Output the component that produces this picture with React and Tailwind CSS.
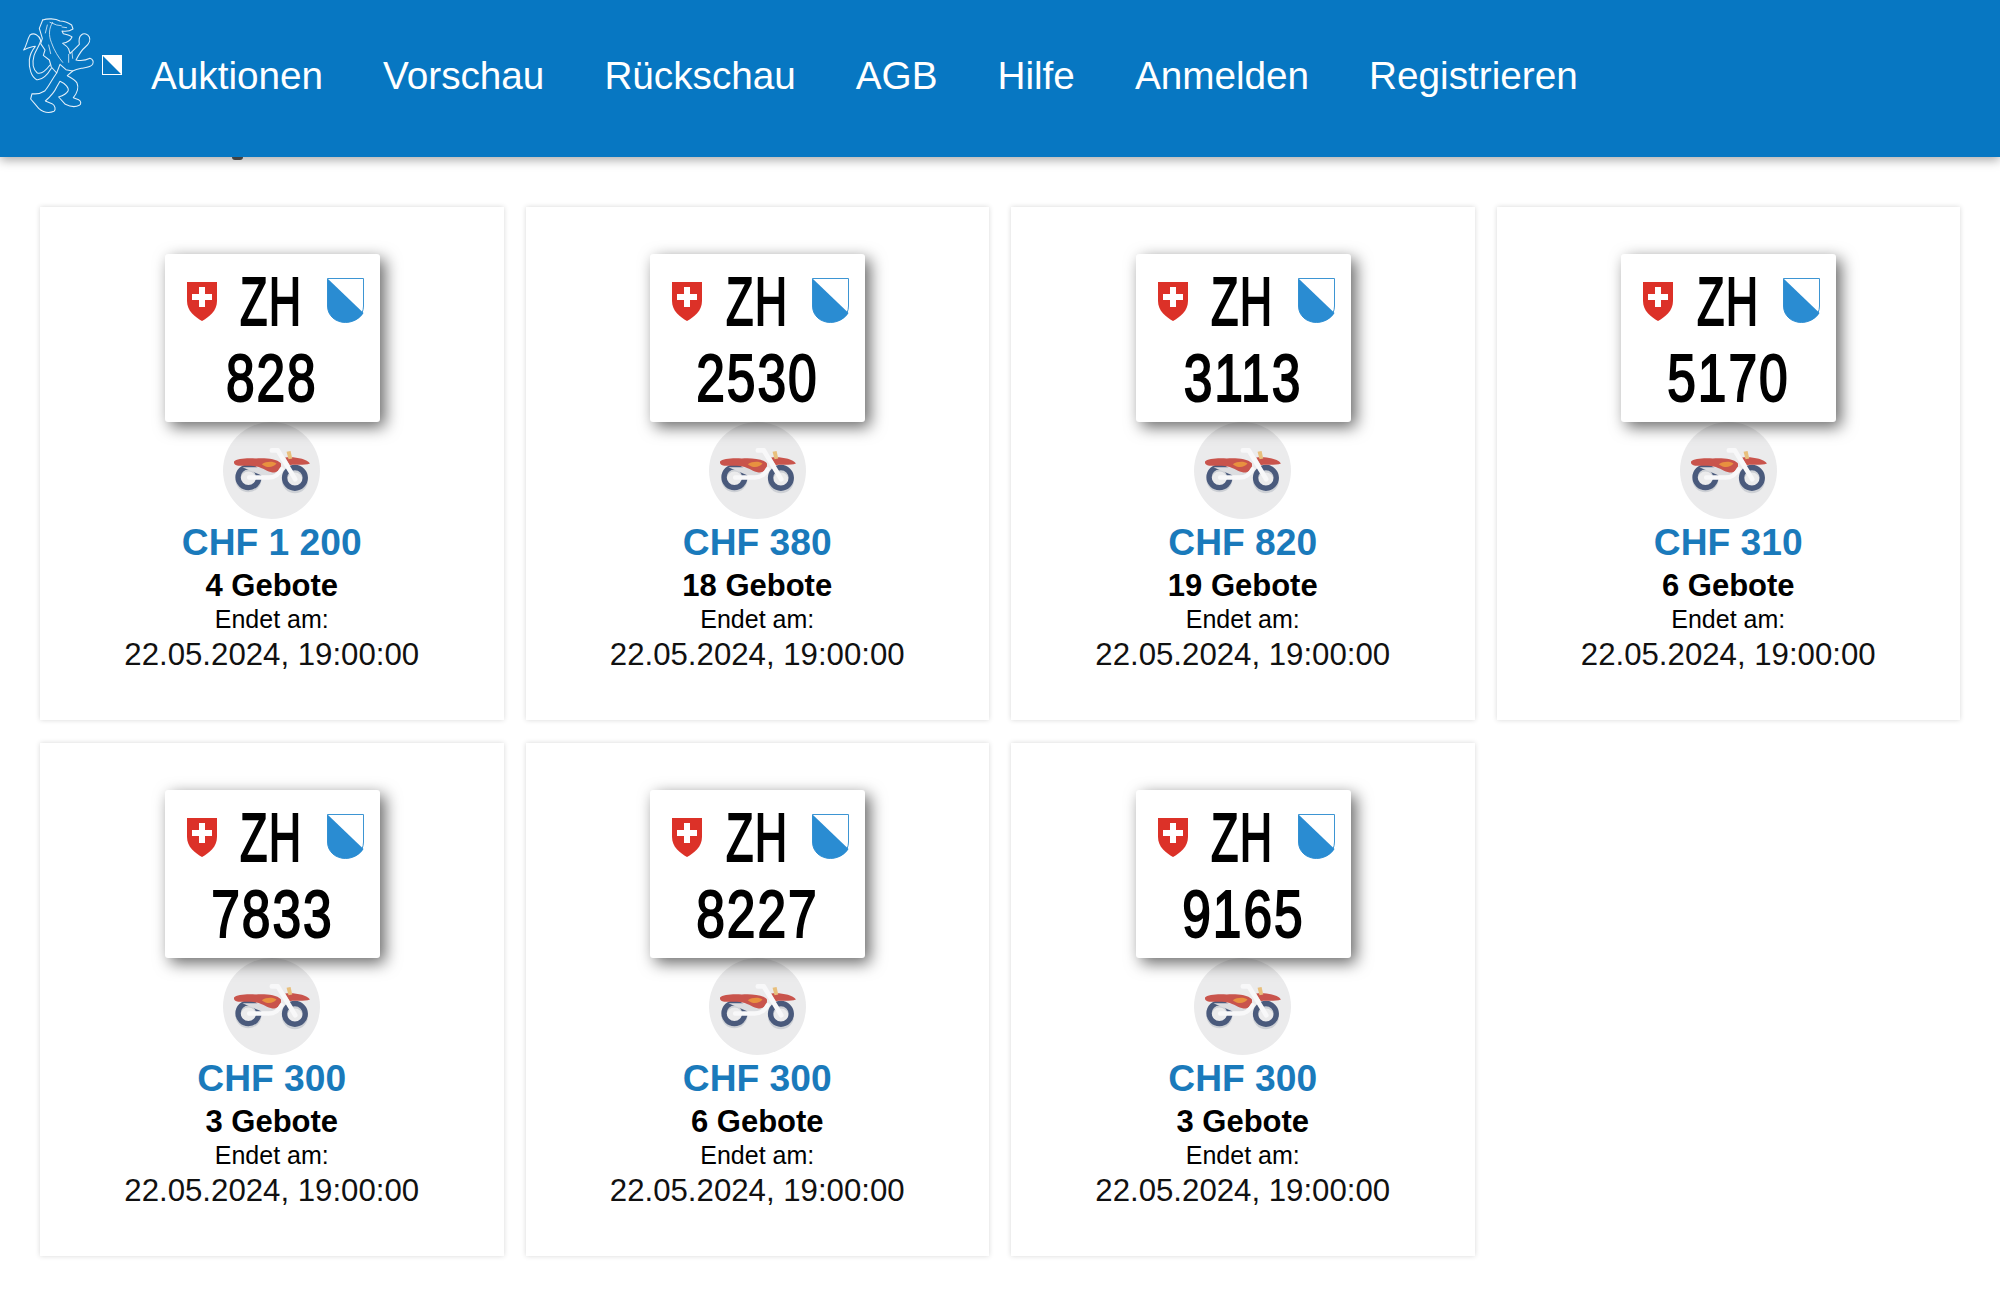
const plates = [
  { no: '828', price: 'CHF 1 200', bids: '4 Gebote' },
  { no: '2530', price: 'CHF 380', bids: '18 Gebote' },
  { no: '3113', price: 'CHF 820', bids: '19 Gebote' },
  { no: '5170', price: 'CHF 310', bids: '6 Gebote' },
  { no: '7833', price: 'CHF 300', bids: '3 Gebote' },
  { no: '8227', price: 'CHF 300', bids: '6 Gebote' },
  { no: '9165', price: 'CHF 300', bids: '3 Gebote' },
];

const navItems = ['Auktionen', 'Vorschau', 'Rückschau', 'AGB', 'Hilfe', 'Anmelden', 'Registrieren'];

function Lion() {
  return (
    <svg viewBox="0 0 375 375" className="w-[125px] h-[125px] shrink-0" fill="none" stroke="#e3eff9" strokeWidth="3.2" strokeLinejoin="round" strokeLinecap="round">
      {/* head, front legs and hind legs */}
      <path d="M98 45 C112 40 136 40 150 48 C162 48 176 54 185 60 L189 72 C180 78 168 80 156 78 L160 86 C170 88 180 90 186 96 C182 106 174 112 158 115 C166 120 172 124 176 132 L180 146 L196 130 L208 118 C206 104 208 94 214 90 C222 82 234 88 238 96 C242 106 238 116 226 126 C216 134 208 146 198 165 C212 168 228 166 240 160 C248 162 252 170 248 178 C242 188 226 188 214 190 C204 192 196 194 188 198 L172 212 C184 218 196 224 201 234 C206 246 206 258 190 278 L206 284 C214 288 214 298 208 301 C198 306 182 306 166 298 L146 276 C158 272 170 266 174 258 C178 248 166 236 150 229 L140 246 C134 260 122 274 106 288 L126 296 C136 302 138 314 132 319 C120 324 102 324 86 310 L74 296 L62 282 L66 266 C80 268 92 266 104 258 C116 246 124 226 140 204" />
      {/* mane */}
      <path d="M98 45 L88 70 L97 100 L92 116 L105 135 L100 151 L118 165 L124 186 L140 204 L150 178 L168 194 L188 198" />
      <path d="M128 52 C116 70 116 92 124 112 C132 136 146 158 158 172 M112 60 L106 84 M116 120 L122 146 M176 148 L176 172 M186 142 L188 160 M120 52 L140 60 L154 62 M156 66 L170 68" strokeWidth="2.4" />
      {/* tail */}
      <path d="M124 190 C112 210 96 226 80 224 C64 216 56 190 58 164 C60 148 66 136 76 124 C66 124 52 130 41 135 C50 122 52 102 60 90 C72 82 88 90 92 106 C90 120 78 134 72 152 C66 174 70 194 82 204 C94 208 108 196 120 180" />
    </svg>
  );
}

function SwissShield() {
  return (
    <svg viewBox="0 0 30 40" className="w-[30px] h-[40px] shrink-0">
      <path d="M0 1 H30 V20 C30 30 22 36 15 40 C8 36 0 30 0 20 Z" fill="#dc3128" />
      <path d="M12 6 H18 V13 H25 V19 H18 V26 H12 V19 H5 V13 H12 Z" fill="#fff" />
    </svg>
  );
}

function ZurichShield() {
  return (
    <svg viewBox="0 0 37 45" className="w-[37px] h-[45px] shrink-0">
      <path d="M0.5 0.5 H36.5 V28 C36.5 38 28 44.5 18.5 44.5 C9 44.5 0.5 38 0.5 28 Z" fill="#fff" stroke="#3d95d3" strokeWidth="1" />
      <path d="M0.5 0.5 L36.5 35 C33 41 26 44.5 18.5 44.5 C9 44.5 0.5 38 0.5 28 Z" fill="#2a8cd2" />
    </svg>
  );
}

function Bike() {
  return (
    <svg viewBox="72 37 290 290" className="absolute inset-0 w-full h-full" fill="none">
      {/* wheel shadows */}
      <circle cx="148" cy="208" r="31" stroke="#cdd0d5" strokeWidth="16" />
      <circle cx="287" cy="211" r="31" stroke="#cdd0d5" strokeWidth="16" />
      {/* wheels */}
      <circle cx="148" cy="202" r="31" stroke="#4a5a7c" strokeWidth="16" />
      <circle cx="287" cy="204" r="31" stroke="#4a5a7c" strokeWidth="16" />
      {/* fender shadow */}
      <path d="M130 172 H250 L240 198 H190 Z" fill="#dcdde0" />
      {/* seat and tank */}
      <path d="M105 155 C112 146 145 144 170 146 C195 144 232 146 245 160 C248 176 238 188 220 188 C205 186 192 174 172 170 C150 166 125 170 112 166 C106 164 104 160 105 155 Z" fill="#c9544c" />
      <path d="M258 143 C285 140 322 146 332 161 C315 168 285 163 272 166 Z" fill="#c9544c" />
      <path d="M188 163 C202 154 222 154 232 161 C222 173 204 176 188 163 Z" fill="#e8913f" />
      {/* headlight */}
      <path d="M262 126 L274 124 L279 146 L268 148 Z" fill="#e8bf7c" />
      {/* frame and fork */}
      <path d="M150 203 H208 C226 203 238 196 247 178" stroke="#f8f8f9" strokeWidth="13" strokeLinecap="round" />
      <path d="M218 122 H236 L288 208" stroke="#f8f8f9" strokeWidth="14" strokeLinecap="round" strokeLinejoin="round" />
    </svg>
  );
}

function Plate({ no }) {
  return (
    <div className="relative z-10 ml-[1px] w-[215px] h-[168px] bg-white rounded-[3px] shadow-[5px_5px_16px_rgba(0,0,0,0.6)] overflow-hidden font-['Liberation_Sans',sans-serif] text-black">
      <div className="flex items-center justify-between pl-[22px] pr-[16px] pt-[20px] h-[73px]">
        <SwissShield />
        <span className="text-[68px] leading-none [-webkit-text-stroke:2px_black] scale-x-[0.66] tracking-[2px] blur-[0.4px]">ZH</span>
        <ZurichShield />
      </div>
      <div className="text-center mt-[16px]">
        <span className="inline-block text-[66px] leading-[70px] tracking-[2.5px] [-webkit-text-stroke:2px_black] scale-x-[0.78] blur-[0.4px]">{no}</span>
      </div>
    </div>
  );
}

function Card({ no, price, bids }) {
  return (
    <div className="h-[513px] bg-white shadow-[0_0_5px_rgba(0,0,0,0.16)] pt-[47px] flex flex-col items-center font-['Liberation_Sans',sans-serif] text-black">
      <Plate no={no} />
      <div className="relative w-[97px] h-[97px] rounded-full bg-[#ebebec] shrink-0">
        <Bike />
      </div>
      <div className="text-[37.2px] leading-[44px] font-bold text-[#1a7abb] mt-[1px]">{price}</div>
      <div className="text-[31px] leading-[40px] font-bold mt-[2px]">{bids}</div>
      <div className="text-[25px] leading-[28px] -mt-[1px]">Endet am:</div>
      <div className="text-[31.2px] leading-[38px] mt-[3px] text-[#111]">22.05.2024, 19:00:00</div>
    </div>
  );
}

export default function App() {
  return (
    <div className="min-h-[1298px] bg-white font-['Liberation_Sans',sans-serif]">
      <header className="relative z-20 h-[157px] bg-[#0777c2] shadow-[0_3px_10px_rgba(0,0,0,0.35)] flex items-start pl-[10px] pt-[5px]">
        <Lion />
        <div className="w-[20px] h-[20px] shrink-0 border border-white -ml-[33px] mt-[50px] relative overflow-hidden">
          <svg viewBox="0 0 20 20" className="w-full h-full">
            <path d="M0 0 H20 V20 Z" fill="#fff" />
          </svg>
        </div>
        <nav className="flex gap-[60px] ml-[29px] mt-[48px] text-[38.7px] leading-[46px] text-white">
          {navItems.map((item) => (
            <a key={item} href="#">{item}</a>
          ))}
        </nav>
      </header>
      <main className="relative px-10 pt-[50px] pb-[40px]">
        {/* tail of a heading that scrolled under the bar */}
        <div className="absolute top-0 left-[232px] w-[11px] h-[3px] rounded-b-full bg-[#555]" />
        <div className="grid grid-cols-4 gap-x-[22px] gap-y-[23px]">
          {plates.map((p) => (
            <Card key={p.no} {...p} />
          ))}
        </div>
      </main>
    </div>
  );
}
